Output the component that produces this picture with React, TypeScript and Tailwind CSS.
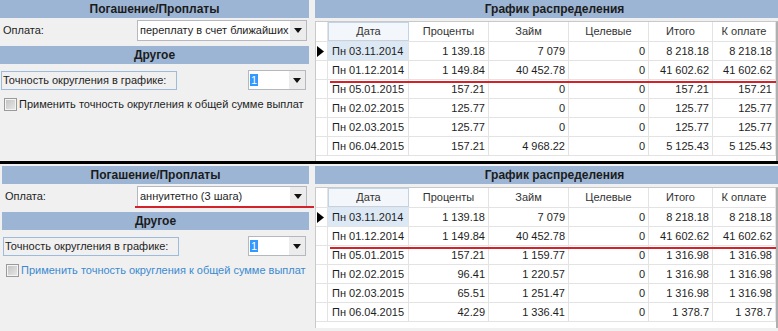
type Row = string[];

const topRows: Row[] = [
  ['Пн 03.11.2014', '1 139.18', '7 079', '0', '8 218.18', '8 218.18'],
  ['Пн 01.12.2014', '1 149.84', '40 452.78', '0', '41 602.62', '41 602.62'],
  ['Пн 05.01.2015', '157.21', '0', '0', '157.21', '157.21'],
  ['Пн 02.02.2015', '125.77', '0', '0', '125.77', '125.77'],
  ['Пн 02.03.2015', '125.77', '0', '0', '125.77', '125.77'],
  ['Пн 06.04.2015', '157.21', '4 968.22', '0', '5 125.43', '5 125.43'],
];

const bottomRows: Row[] = [
  ['Пн 03.11.2014', '1 139.18', '7 079', '0', '8 218.18', '8 218.18'],
  ['Пн 01.12.2014', '1 149.84', '40 452.78', '0', '41 602.62', '41 602.62'],
  ['Пн 05.01.2015', '157.21', '1 159.77', '0', '1 316.98', '1 316.98'],
  ['Пн 02.02.2015', '96.41', '1 220.57', '0', '1 316.98', '1 316.98'],
  ['Пн 02.03.2015', '65.51', '1 251.47', '0', '1 316.98', '1 316.98'],
  ['Пн 06.04.2015', '42.29', '1 336.41', '0', '1 378.7', '1 378.7'],
];

const widths = ['w-[81px]', 'w-[80px]', 'w-[80px]', 'w-[80px]', 'w-[64px]', 'w-[63px]'];
const titles = ['Дата', 'Проценты', 'Займ', 'Целевые', 'Итого', 'К оплате'];

const Arrow = () => (
  <div className="flex h-full w-[16px] items-center justify-center bg-[#ececec]">
    <svg width="8" height="5" viewBox="0 0 8 5">
      <path d="M0 0h8L4 5z" fill="#111" />
    </svg>
  </div>
);

const Band = ({ title, shift = '' }: { title: string; shift?: string }) => (
  <div className={`flex h-[18px] items-center justify-center bg-[#9cb5d4] text-[12px] font-bold text-[#1b1b1b] ${shift}`}>
    {title}
  </div>
);

const Section = ({
  rows,
  payment,
  marked,
  inset,
}: {
  rows: Row[];
  payment: string;
  marked: boolean;
  inset: boolean;
}) => (
  <div className={`flex ${inset ? 'pl-[2px]' : ''}`}>
    <aside className={`flex flex-col ${inset ? 'w-[307px]' : 'w-[309px]'}`}>
      <Band title="Погашение/Проплаты" />
      <div className="mt-[2px] flex h-[21px] items-center justify-between">
        <span className="pl-[3px]">Оплата:</span>
        <div className="relative mr-[2px] flex h-full w-[170px] items-center border border-[#b5b8be] bg-white pl-[2px]">
          <span className="flex-1 overflow-hidden whitespace-nowrap">{payment}</span>
          <Arrow />
          {marked && <div className="absolute left-[-3px] top-full h-[2px] w-[179px] bg-[#d2232a]" />}
        </div>
      </div>
      <div className="mt-[5px]">
        <Band title="Другое" />
      </div>
      <div className="mt-[6px] flex h-[20px] items-center justify-between">
        <span className="ml-[1px] flex h-[19px] w-[176px] items-center border border-[#9fbbdc] pl-[1px]">
          Точность округления в графике:
        </span>
        <div className="mr-[3px] flex h-full w-[58px] items-center border border-[#b5b8be] bg-white pl-[1px]">
          <span className="flex-1">
            <span className="bg-[#3399ff] px-[1px] text-white">1</span>
          </span>
          <Arrow />
        </div>
      </div>
      <div className="mt-[7px] flex h-[15px] items-center">
        <div className="ml-[4px] flex h-[13px] w-[13px] items-center justify-center border border-[#9a9a9a] bg-[#f4f4f4]">
          <div className="h-[9px] w-[9px] bg-gradient-to-br from-[#c4c4c4] to-[#e6e6e6]" />
        </div>
        <span className={`ml-[2px] whitespace-nowrap ${marked ? 'text-[#3b8ad0]' : ''}`}>
          Применить точность округления к общей сумме выплат
        </span>
      </div>
    </aside>

    <section className="ml-[6px] flex flex-1 flex-col">
      <Band title="График распределения" shift="pl-[16px]" />
      <div className="relative mt-[3px] border-l border-t border-r-2 border-[#c9c9c9] border-r-[#b0b0b0] bg-white">
        <div className="flex h-[20px] border-b border-[#e3e3e3] text-[#333]">
          <div className="w-[12px] border-r border-[#e3e3e3]" />
          {titles.map((t, i) => (
            <div
              key={t}
              className={`${widths[i]} flex items-center justify-center border-r ${
                i === 0 ? 'border border-[#c3d3e6] bg-[#f3f6fa]' : 'border-[#e3e3e3]'
              }`}
            >
              {t}
            </div>
          ))}
        </div>
        {rows.map((r, ri) => (
          <div key={ri} className="flex h-[19px] border-b border-[#e3e3e3]">
            <div className="flex w-[12px] items-center border-r border-[#e3e3e3] pl-[1px]">
              {ri === 0 && (
                <svg width="7" height="11" viewBox="0 0 7 11">
                  <path d="M0 0l7 5.5L0 11z" fill="#000" />
                </svg>
              )}
            </div>
            {r.map((c, ci) => (
              <div
                key={ci}
                className={`${widths[ci]} flex items-center border-r border-[#e3e3e3] ${
                  ci === 0 ? 'pl-[4px]' : 'justify-end pr-[3px]'
                } ${ci === 0 && ri === 0 ? 'bg-[#dde8f5]' : ''}`}
              >
                {c}
              </div>
            ))}
          </div>
        ))}
        <div className="h-[6px]" />
        <div className="absolute left-[14px] right-0 top-[59px] h-[2px] bg-[#d2232a]" />
      </div>
    </section>
  </div>
);

export default function App() {
  return (
    <div className="h-[331px] w-[778px] overflow-hidden bg-[#f0f0f0] font-['Liberation_Sans',Arial,sans-serif] text-[11px] text-[#1e1e1e]">
      <div className="h-[161px] overflow-hidden">
        <Section rows={topRows} payment="переплату в счет ближайших" marked={false} inset={false} />
      </div>
      <div className="h-[3px] bg-black" />
      <div className="pt-[2px]">
        <Section rows={bottomRows} payment="аннуитетно (3 шага)" marked={true} inset={true} />
      </div>
    </div>
  );
}
